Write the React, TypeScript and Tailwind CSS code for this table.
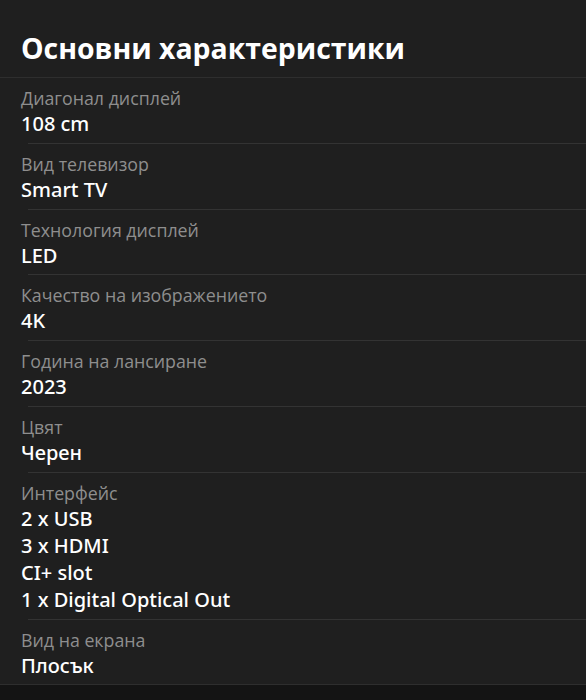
import React from "react";

const rows: { label: string; values: string[] }[] = [
  { label: "Диагонал дисплей", values: ["108 cm"] },
  { label: "Вид телевизор", values: ["Smart TV"] },
  { label: "Технология дисплей", values: ["LED"] },
  { label: "Качество на изображението", values: ["4K"] },
  { label: "Година на лансиране", values: ["2023"] },
  { label: "Цвят", values: ["Черен"] },
  { label: "Интерфейс", values: ["2 x USB", "3 x HDMI", "CI+ slot", "1 x Digital Optical Out"] },
  { label: "Вид на екрана", values: ["Плосък"] },
];

export default function App() {
  return (
    <div
      className="w-[586px] h-[700px] bg-[#141414] overflow-hidden"
      style={{ fontFamily: '"Open Sans", "Noto Sans", sans-serif' }}
    >
      <div className="bg-[#1f1f1f] border-b border-[#2e2e2e]">
        <div className="px-[21px] pt-[30px] pb-[10px] border-b border-[#2e2e2e]">
          <h2 className="text-[28.4px] leading-[37px] font-bold text-white">Основни характеристики</h2>
        </div>
        <div className="pl-[28px]">
          {rows.map((r, i) => (
            <div
              key={r.label}
              className={
                "pt-2 pb-[5.8px] " + (i < rows.length - 1 ? "border-b border-[#333333]" : "")
              }
            >
              <div className="-ml-[7px] text-[17.8px] leading-[24px] text-[#8e8e8e]">{r.label}</div>
              {r.values.map((v) => (
                <div
                  key={v}
                  className="-ml-[7px] text-[20px] leading-[27px] font-medium text-white"
                  style={{ fontFamily: '"Noto Sans", "Open Sans", sans-serif' }}
                >
                  {v}
                </div>
              ))}
            </div>
          ))}
        </div>
      </div>
    </div>
  );
}
